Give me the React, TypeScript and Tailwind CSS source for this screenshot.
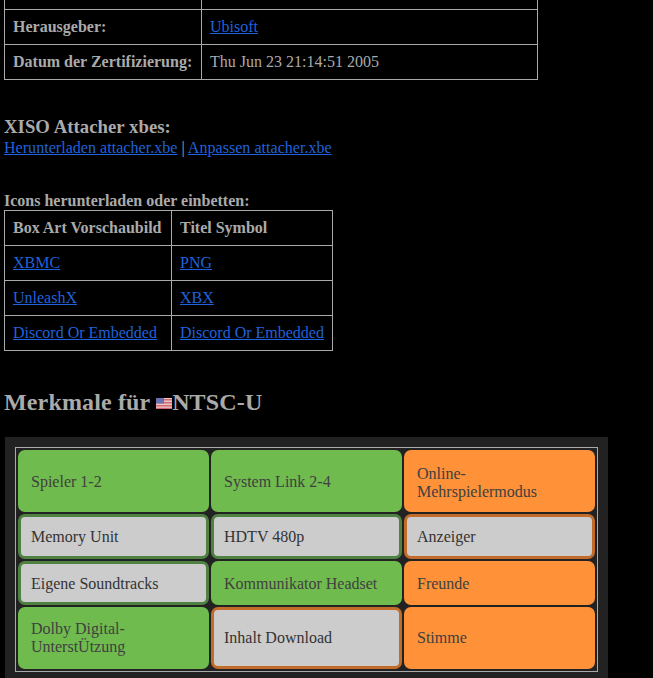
const linkClass = 'text-[#1f62dc] underline'
const cellClass = 'border border-[#aaa] px-2 py-[7px] text-left align-middle'

type Feature = { label: string; tone: 'green' | 'orange'; off?: boolean; nudge?: string }

const features: Feature[] = [
  { label: 'Spieler 1-2', tone: 'green', nudge: 'pt-[2px]' },
  { label: 'System Link 2-4', tone: 'green', nudge: 'pt-[2px]' },
  { label: 'Online-Mehrspielermodus', tone: 'orange', nudge: 'pt-[4px]' },
  { label: 'Memory Unit', tone: 'green', off: true, nudge: 'pt-[2px]' },
  { label: 'HDTV 480p', tone: 'green', off: true, nudge: 'pt-[2px]' },
  { label: 'Anzeiger', tone: 'orange', off: true, nudge: 'pt-[2px]' },
  { label: 'Eigene Soundtracks', tone: 'green', off: true, nudge: 'pt-[2px]' },
  { label: 'Kommunikator Headset', tone: 'green', nudge: 'pt-[2px]' },
  { label: 'Freunde', tone: 'orange', nudge: 'pt-[2px]' },
  { label: 'Dolby Digital-UnterstÜtzung', tone: 'green' },
  { label: 'Inhalt Download', tone: 'orange', off: true },
  { label: 'Stimme', tone: 'orange' },
]

function FeatureCell({ label, tone, off, nudge }: Feature) {
  if (off) {
    return (
      <div
        className={`flex items-center rounded-[7px] border-[3px] bg-[#ccc] px-[10px] text-[#333] ${nudge ?? ''} ${
          tone === 'green' ? 'border-[#4f8143]' : 'border-[#c26c2b]'
        }`}
      >
        {label}
      </div>
    )
  }
  return (
    <div
      className={`flex items-center rounded-[7px] px-[13px] text-[#404040] ${nudge ?? ''} ${
        tone === 'green' ? 'bg-[#70bb4e]' : 'bg-[#ff9138]'
      }`}
    >
      <span>{label}</span>
    </div>
  )
}

function Flag() {
  return (
    <svg width="16" height="11" viewBox="0 0 16 11" className="inline-block align-[1px] blur-[0.5px]">
      <rect width="16" height="11" fill="#eec4c4" />
      <rect y="1" width="16" height="1.5" fill="#cf6a72" />
      <rect y="4" width="16" height="1.5" fill="#cf6a72" />
      <rect y="7" width="16" height="1.5" fill="#cf6a72" />
      <rect y="9.8" width="16" height="1.2" fill="#cf6a72" />
      <rect width="8" height="5.5" fill="#6a70b0" />
    </svg>
  )
}

export default function App() {
  return (
    <div className="h-[678px] overflow-hidden bg-black px-1 font-['Liberation_Serif',serif] text-base leading-[18px] text-[#aaa]">
      <table className="w-[534px] border-collapse">
        <tbody>
          <tr className="h-[9px]">
            <td className="w-[197px] border-x border-[#aaa]" />
            <td className="border-x border-[#aaa]" />
          </tr>
          <tr className="h-[35px]">
            <th className={cellClass}>Herausgeber:</th>
            <td className={cellClass}>
              <a className={linkClass}>Ubisoft</a>
            </td>
          </tr>
          <tr className="h-[35px]">
            <th className={cellClass}>Datum der Zertifizierung:</th>
            <td className={cellClass}>Thu Jun 23 21:14:51 2005</td>
          </tr>
        </tbody>
      </table>

      <h3 className="mt-[36px] text-[18.72px] leading-[22px] font-bold tracking-[0.05px]">XISO Attacher xbes:</h3>
      <p className="mt-px tracking-[0.04px]">
        <a className={linkClass}>Herunterladen attacher.xbe</a> | <a className={linkClass}>Anpassen attacher.xbe</a>
      </p>

      <p className="mt-[35px] font-bold">Icons herunterladen oder einbetten:</p>
      <table className="w-[329px] border-collapse">
        <tbody>
          <tr className="h-[35px]">
            <th className={`${cellClass} w-[167px]`}>Box Art Vorschaubild</th>
            <th className={cellClass}>Titel Symbol</th>
          </tr>
          <tr className="h-[35px]">
            <td className={cellClass}>
              <a className={linkClass}>XBMC</a>
            </td>
            <td className={cellClass}>
              <a className={linkClass}>PNG</a>
            </td>
          </tr>
          <tr className="h-[35px]">
            <td className={cellClass}>
              <a className={linkClass}>UnleashX</a>
            </td>
            <td className={cellClass}>
              <a className={linkClass}>XBX</a>
            </td>
          </tr>
          <tr className="h-[35px]">
            <td className={cellClass}>
              <a className={linkClass}>Discord Or Embedded</a>
            </td>
            <td className={cellClass}>
              <a className={linkClass}>Discord Or Embedded</a>
            </td>
          </tr>
        </tbody>
      </table>

      <h2 className="mt-[38px] text-2xl leading-[27px] font-bold tracking-[0.15px]">
        Merkmale für <Flag />NTSC-U
      </h2>

      <div className="mt-[21px] ml-px w-[603px] bg-[#222] p-[10px]">
        <div className="grid grid-cols-3 grid-rows-[62px_45px_44px_62px] gap-[2px] border border-[#aaa] p-[2px]">
          {features.map((f) => (
            <FeatureCell key={f.label} {...f} />
          ))}
        </div>
      </div>
    </div>
  )
}
